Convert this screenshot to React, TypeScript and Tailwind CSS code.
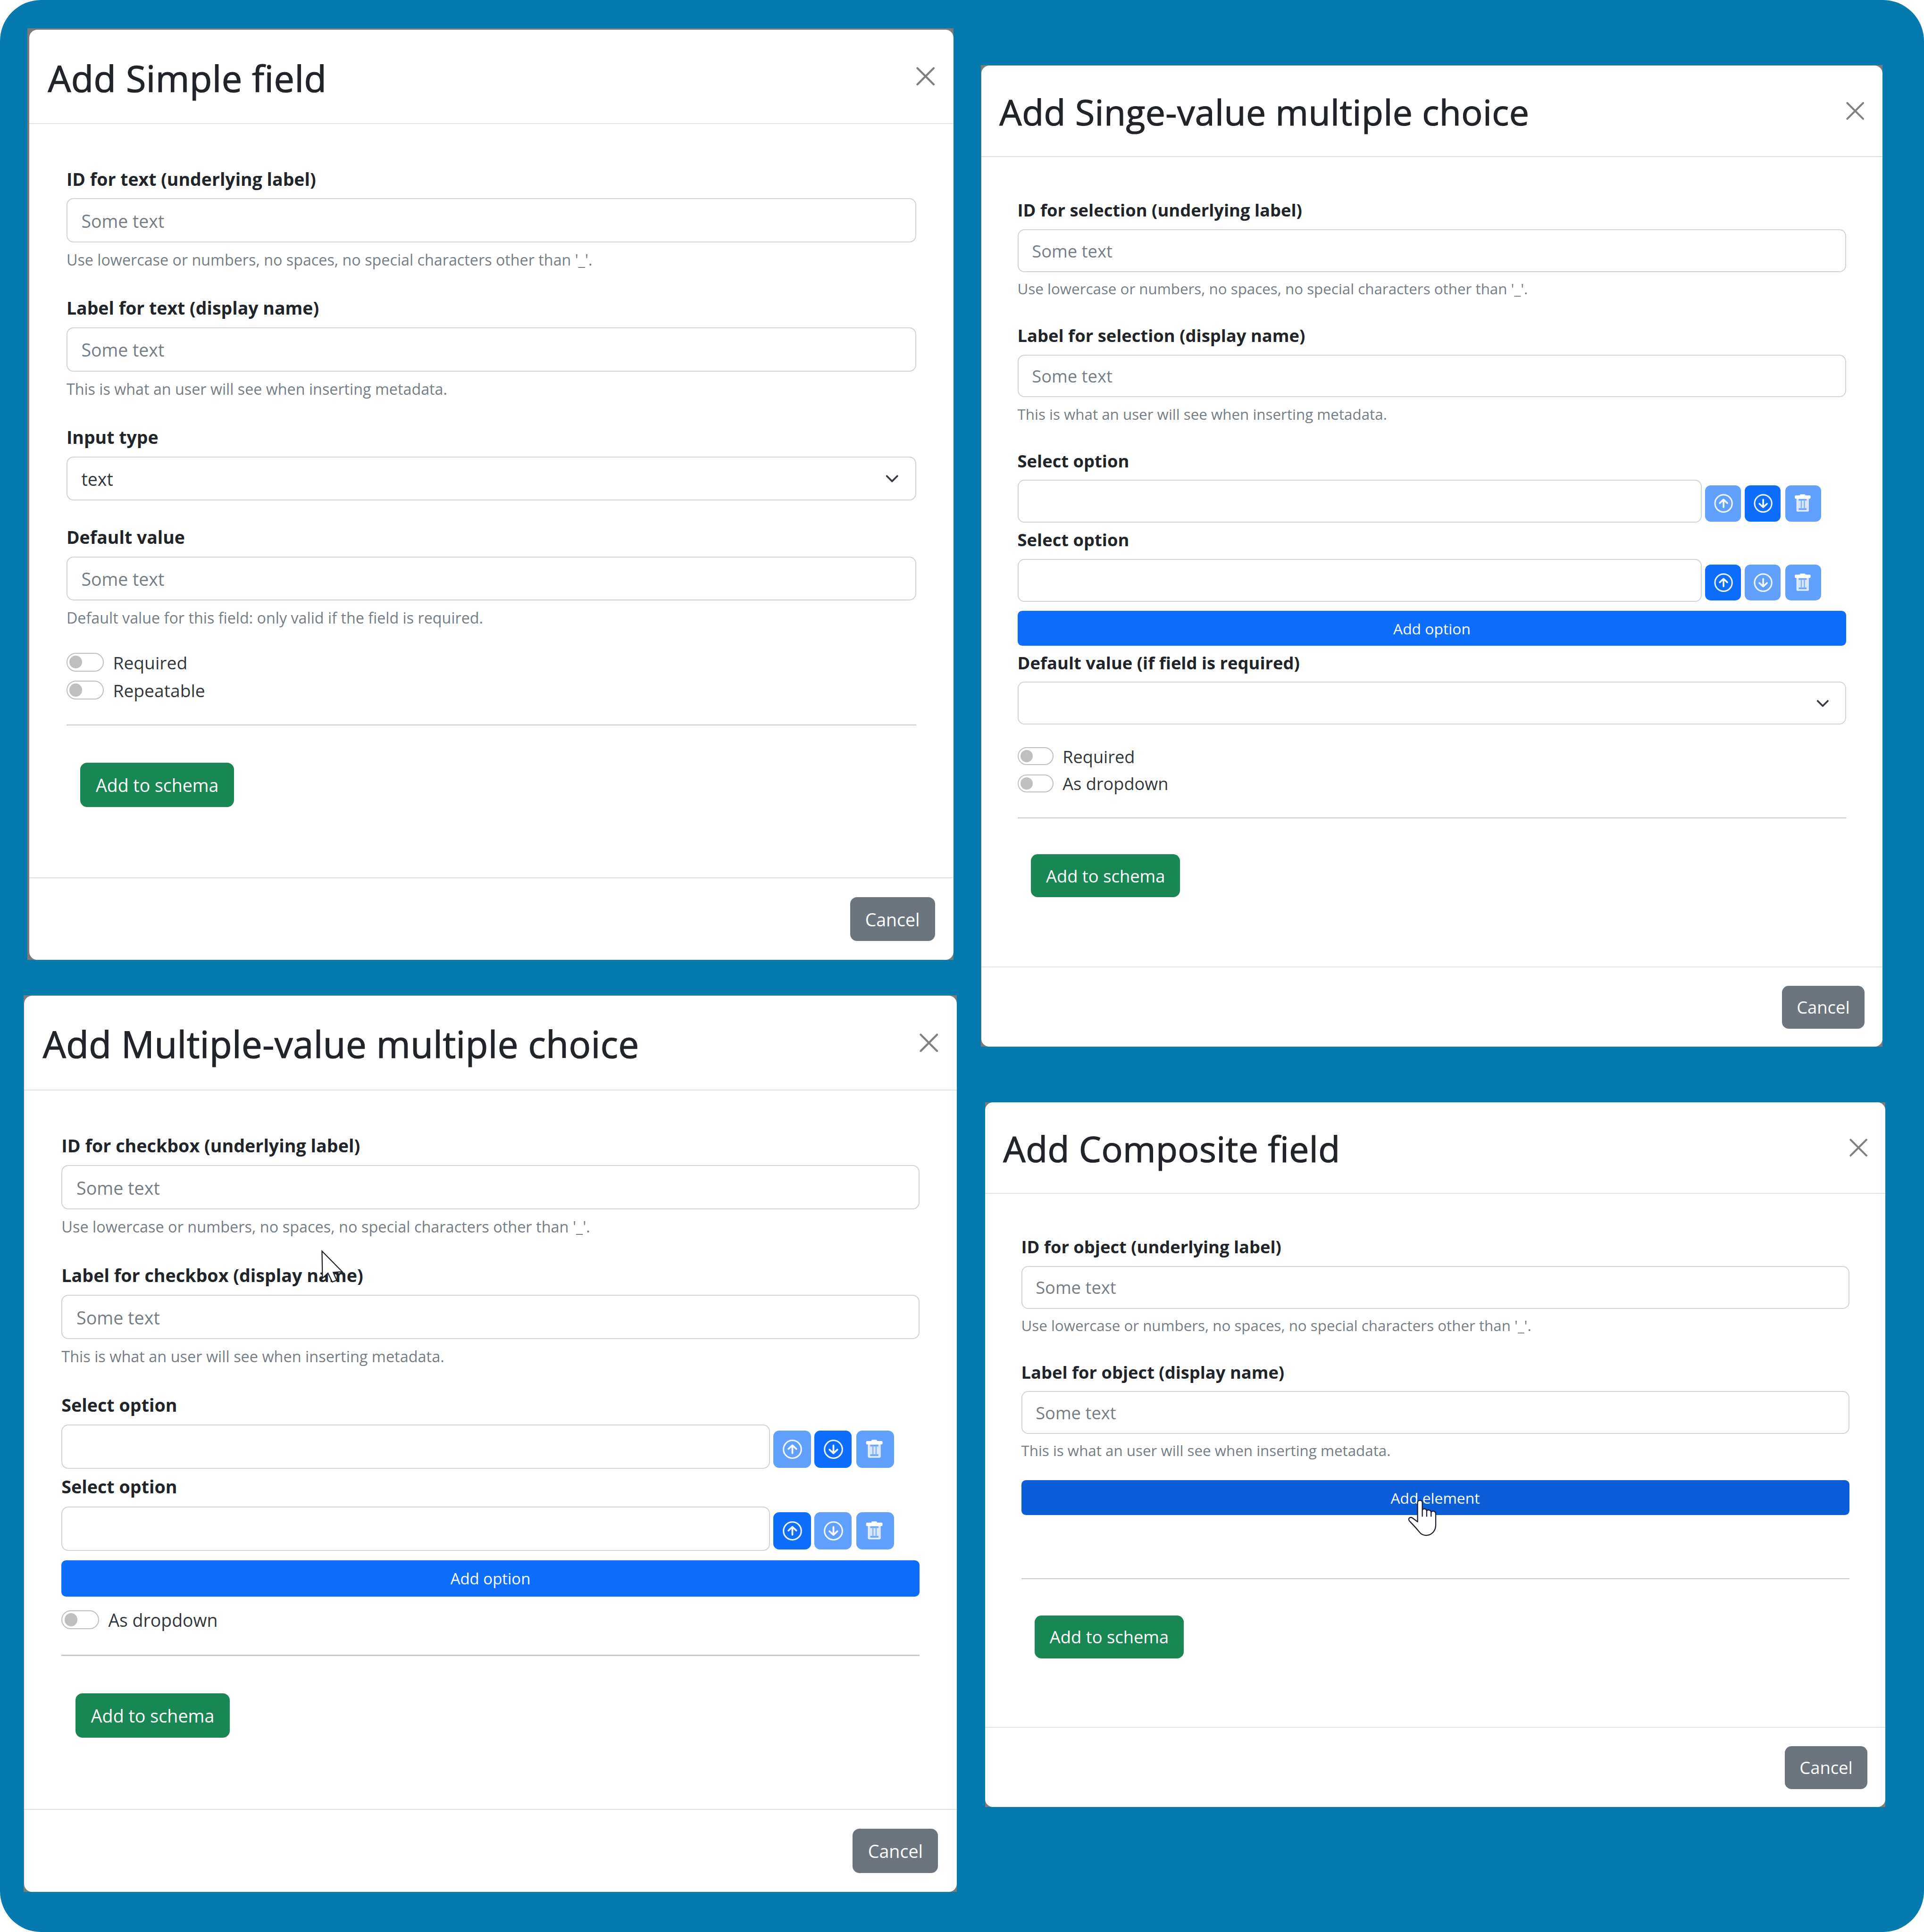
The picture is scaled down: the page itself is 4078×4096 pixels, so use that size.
import type { ReactNode } from "react";

/* Every dialog sets --spacing to the size of one design pixel, so p-16 is 16 design pixels at that dialog's zoom. */

function CloseIcon() {
  return (
    <svg viewBox="0 0 16 16" className="h-16 w-16 text-[#808080]" fill="none" stroke="currentColor" strokeLinecap="round" strokeWidth="1.7">
      <path d="M1 1L15 15M15 1L1 15" />
    </svg>
  );
}

function Chevron() {
  return (
    <svg viewBox="0 0 16 16" className="h-12 w-12" fill="none" stroke="#343a40" strokeLinecap="round" strokeLinejoin="round" strokeWidth="2">
      <path d="m2 5 6 6 6-6" />
    </svg>
  );
}

function ArrowIcon({ down }: { down?: boolean }) {
  return (
    <svg viewBox="0 0 32 32" className="h-32 w-32" fill="none" stroke="#fff" strokeLinecap="round" strokeLinejoin="round">
      <circle cx="16.35" cy="16" r="7.6" strokeWidth="1.25" opacity="0.92" />
      <path
        d={down ? "M16.35 12.7V19M13 16.3l3.35 3.1 3.35-3.1" : "M16.35 19.3V13M13 15.7l3.35-3.1 3.35 3.1"}
        strokeWidth="1.5"
        opacity="0.95"
      />
    </svg>
  );
}

function TrashIcon() {
  return (
    <svg viewBox="0 0 32 32" className="h-32 w-32">
      <rect x="9.9" y="11.5" width="11" height="11.7" rx="1.2" fill="#d8e7ff" />
      <path d="M10.3 12V22a.8.8 0 0 0 .8.8h8.6a.8.8 0 0 0 .8-.8" fill="none" stroke="#fff" strokeWidth="0.5" opacity="0.7" />
      <path d="M11.9 12h7v1.5h-7zM11.9 20.3h7v1.4h-7z" fill="#6ba5ff" />
      <path d="M13.7 13h1v8h-1zM16.4 13h1v8h-1z" fill="#7db0ff" />
      <rect x="8.4" y="8.9" width="14" height="3" rx="0.9" fill="#fff" />
      <rect x="12.9" y="7.9" width="5" height="2.5" rx="1" fill="#fff" />
    </svg>
  );
}

function ArrowCursor() {
  return (
    <svg viewBox="-1 -1 20 30" className="absolute top-34.5 left-221.75 h-30 w-20 overflow-visible">
      <path d="M0 0L0.4 23.2L5.1 18.8L8.8 26.4L12.6 25L9.6 18.2L17.3 17.6Z" fill="#fff" stroke="#1d1e2c" strokeWidth="0.9" />
    </svg>
  );
}

function HandCursor() {
  return (
    <svg viewBox="0 0 25 32" className="absolute top-17.5 left-343 h-32 w-25 overflow-visible">
      <path
        d="M8.2 19.4V2.4C8.2-.3 12.4-.3 12.4 2.4V9.4C12.6 7.3 16.1 7.3 16.3 10C16.7 8.3 20 8.5 20.2 11C21 9.2 24.3 9.6 24.3 12.4V22.4C24.3 27 21 31.4 15.6 31.4C12.8 31.4 11.2 30.4 9.6 28.2C6.4 24.2 3 20.8.9 18.6C-.4 16.6 1.2 14.8 3.4 15.8Z"
        fill="#fff"
        stroke="#1d1e2c"
        strokeWidth="0.95"
        strokeLinejoin="round"
      />
      <path d="M12.4 9.4V14.8M16.3 10V14.8M20.2 11V14.8" fill="none" stroke="#1d1e2c" strokeWidth="0.95" />
    </svg>
  );
}

function Label({ children }: { children: ReactNode }) {
  return (
    <div className="mb-8 h-24">
      <span className="block translate-y-3.25 text-[length:calc(var(--spacing)*15.2)] leading-24 font-bold whitespace-nowrap">{children}</span>
    </div>
  );
}

function Help({ children }: { children: ReactNode }) {
  return (
    <div className="mt-4 h-21">
      <span className="block translate-y-0.5 text-[length:calc(var(--spacing)*13.1)] leading-21 whitespace-nowrap text-[#757d85]">{children}</span>
    </div>
  );
}

function Box({ children, className = "" }: { children?: ReactNode; className?: string }) {
  return (
    <div className={`flex h-38 items-center justify-between rounded-[calc(var(--spacing)*6)] border-[length:var(--spacing)] border-[#ced4da] pr-14 pl-12 ${className}`}>
      {children}
    </div>
  );
}

function BoxText({ children, className = "text-[#757d85]" }: { children: ReactNode; className?: string }) {
  return <span className={`translate-y-0.5 text-[length:calc(var(--spacing)*15.2)] leading-24 ${className}`}>{children}</span>;
}

function TextField({ label, help }: { label: string; help: string }) {
  return (
    <div className="mb-16">
      <Label>{label}</Label>
      <Box>
        <BoxText>Some text</BoxText>
      </Box>
      <Help>{help}</Help>
    </div>
  );
}

function IconButton({ children, active }: { children: ReactNode; active?: boolean }) {
  return (
    <div className={`h-32 w-32 rounded-[calc(var(--spacing)*5)] ${active ? "bg-[#0d6efd]" : "bg-[#62a0ff]"}`}>{children}</div>
  );
}

function OptionRow({ first }: { first?: boolean }) {
  return (
    <div>
      <Label>Select option</Label>
      <div className="flex h-38 items-start">
        <Box className="w-606" />
        <div className="mt-5 ml-3 flex">
          <IconButton active={!first}>
            <ArrowIcon />
          </IconButton>
          <div className="ml-3">
            <IconButton active={first}>
              <ArrowIcon down />
            </IconButton>
          </div>
          <div className="ml-4">
            <IconButton>
              <TrashIcon />
            </IconButton>
          </div>
        </div>
      </div>
    </div>
  );
}

function WideButton({ children, className = "bg-[#0d6efd]" }: { children: ReactNode; className?: string }) {
  return (
    <div className={`flex h-31 items-center justify-center rounded-[calc(var(--spacing)*4)] text-white ${className}`}>
      <span className="translate-y-0.5 text-[length:calc(var(--spacing)*13.3)] leading-21">{children}</span>
    </div>
  );
}

function Switch({ children }: { children: ReactNode }) {
  return (
    <div className="flex h-24 items-center">
      <div className="flex h-16 w-32 items-center rounded-full border-[length:var(--spacing)] border-[#bfbfbf] pl-1.75">
        <div className="h-11 w-11 rounded-full bg-[#bfbfbf]" />
      </div>
      <span className="ml-8 translate-y-0.5 text-[length:calc(var(--spacing)*15.1)] leading-24 text-[#32373c]">{children}</span>
    </div>
  );
}

function Rule() {
  return <div className="h-1 bg-[#c8c9ca]" />;
}

function Button({ children, className }: { children: ReactNode; className: string }) {
  return (
    <div className={`flex h-38 items-center justify-center rounded-[calc(var(--spacing)*6)] text-white ${className}`}>
      <span className="translate-y-0.5 text-[length:calc(var(--spacing)*15.2)] leading-24">{children}</span>
    </div>
  );
}

function Dialog({ title, className, children }: { title: string; className: string; children: ReactNode }) {
  return (
    <section className={`bg-[#7b7b7b] ${className}`}>
      <div className="flex h-full flex-col rounded-[calc(var(--spacing)*7)] bg-white">
        <header className="flex h-81 shrink-0 items-center justify-between border-b-[length:var(--spacing)] border-[#dee2e6] px-16">
          <h2 className="translate-y-1.25 text-[length:calc(var(--spacing)*31.4)] leading-48 tracking-[calc(var(--spacing)*0.18)] whitespace-nowrap [-webkit-text-stroke:calc(var(--spacing)*0.5)_#212529]">{title}</h2>
          <CloseIcon />
        </header>
        <div className="flex-1 px-32 pt-32">
          {children}
          <div className="pt-32 pl-12">
            <Button className="w-132 bg-[#198754]">Add to schema</Button>
          </div>
        </div>
        <footer className="flex h-71 shrink-0 items-center justify-end border-t-[length:var(--spacing)] border-[#dee2e6] px-16">
          <Button className="w-73 bg-[#6c757d]">Cancel</Button>
        </footer>
      </div>
    </section>
  );
}

const idHelp = "Use lowercase or numbers, no spaces, no special characters other than '_'.";
const labelHelp = "This is what an user will see when inserting metadata.";

export default function App() {
  return (
    <div className="h-[4096px] w-[4078px] overflow-hidden bg-white font-['Open_Sans','Noto_Sans',sans-serif] text-[#212529]">
      <main className="flex h-full w-full items-start rounded-[87px] bg-[#057aae]">
        <div className="w-[2028px] shrink-0">
          <Dialog title="Add Simple field" className="mt-[60px] ml-[58px] h-[1975px] w-[1963px] pt-[3px] pl-[4px] [--spacing:2.465px]">
            <TextField label="ID for text (underlying label)" help={idHelp} />
            <TextField label="Label for text (display name)" help={labelHelp} />
            <div className="mb-16">
              <Label>Input type</Label>
              <Box>
                <BoxText className="text-[#32373c]">text</BoxText>
                <Chevron />
              </Box>
            </div>
            <TextField label="Default value" help="Default value for this field: only valid if the field is required." />
            <div className="mb-17.5">
              <Switch>Required</Switch>
              <Switch>Repeatable</Switch>
            </div>
            <Rule />
          </Dialog>
          <Dialog title="Add Multiple-value multiple choice" className="mt-[75px] ml-[50px] h-[1901px] w-[1978px] pt-px pl-px [--spacing:2.478px]">
            <TextField label="ID for checkbox (underlying label)" help={idHelp} />
            <div className="relative">
              <TextField label="Label for checkbox (display name)" help={labelHelp} />
              <div className="absolute -top-41 left-0">
                <ArrowCursor />
              </div>
            </div>
            <OptionRow first />
            <OptionRow />
            <div className="mt-8 mb-8">
              <WideButton>Add option</WideButton>
            </div>
            <div className="mb-18">
              <Switch>As dropdown</Switch>
            </div>
            <Rule />
          </Dialog>
        </div>
        <div className="ml-[51px] w-[1920px] shrink-0">
          <Dialog title="Add Singe-value multiple choice" className="mt-[138px] h-[2081px] w-[1911px] pt-px pl-px [--spacing:2.393px]">
            <TextField label="ID for selection (underlying label)" help={idHelp} />
            <TextField label="Label for selection (display name)" help={labelHelp} />
            <OptionRow first />
            <OptionRow />
            <div className="mt-8">
              <WideButton>Add option</WideButton>
            </div>
            <div className="mb-16">
              <Label>Default value (if field is required)</Label>
              <Box>
                <span />
                <Chevron />
              </Box>
            </div>
            <div className="mb-18">
              <Switch>Required</Switch>
              <Switch>As dropdown</Switch>
            </div>
            <Rule />
          </Dialog>
          <Dialog title="Add Composite field" className="mt-[118px] ml-[9px] h-[1494px] w-[1908px] [--spacing:2.391px]">
            <TextField label="ID for object (underlying label)" help={idHelp} />
            <TextField label="Label for object (display name)" help={labelHelp} />
            <div className="relative mb-56">
              <WideButton className="bg-[#0b5ed7]">Add element</WideButton>
              <HandCursor />
            </div>
            <Rule />
          </Dialog>
        </div>
      </main>
    </div>
  );
}
